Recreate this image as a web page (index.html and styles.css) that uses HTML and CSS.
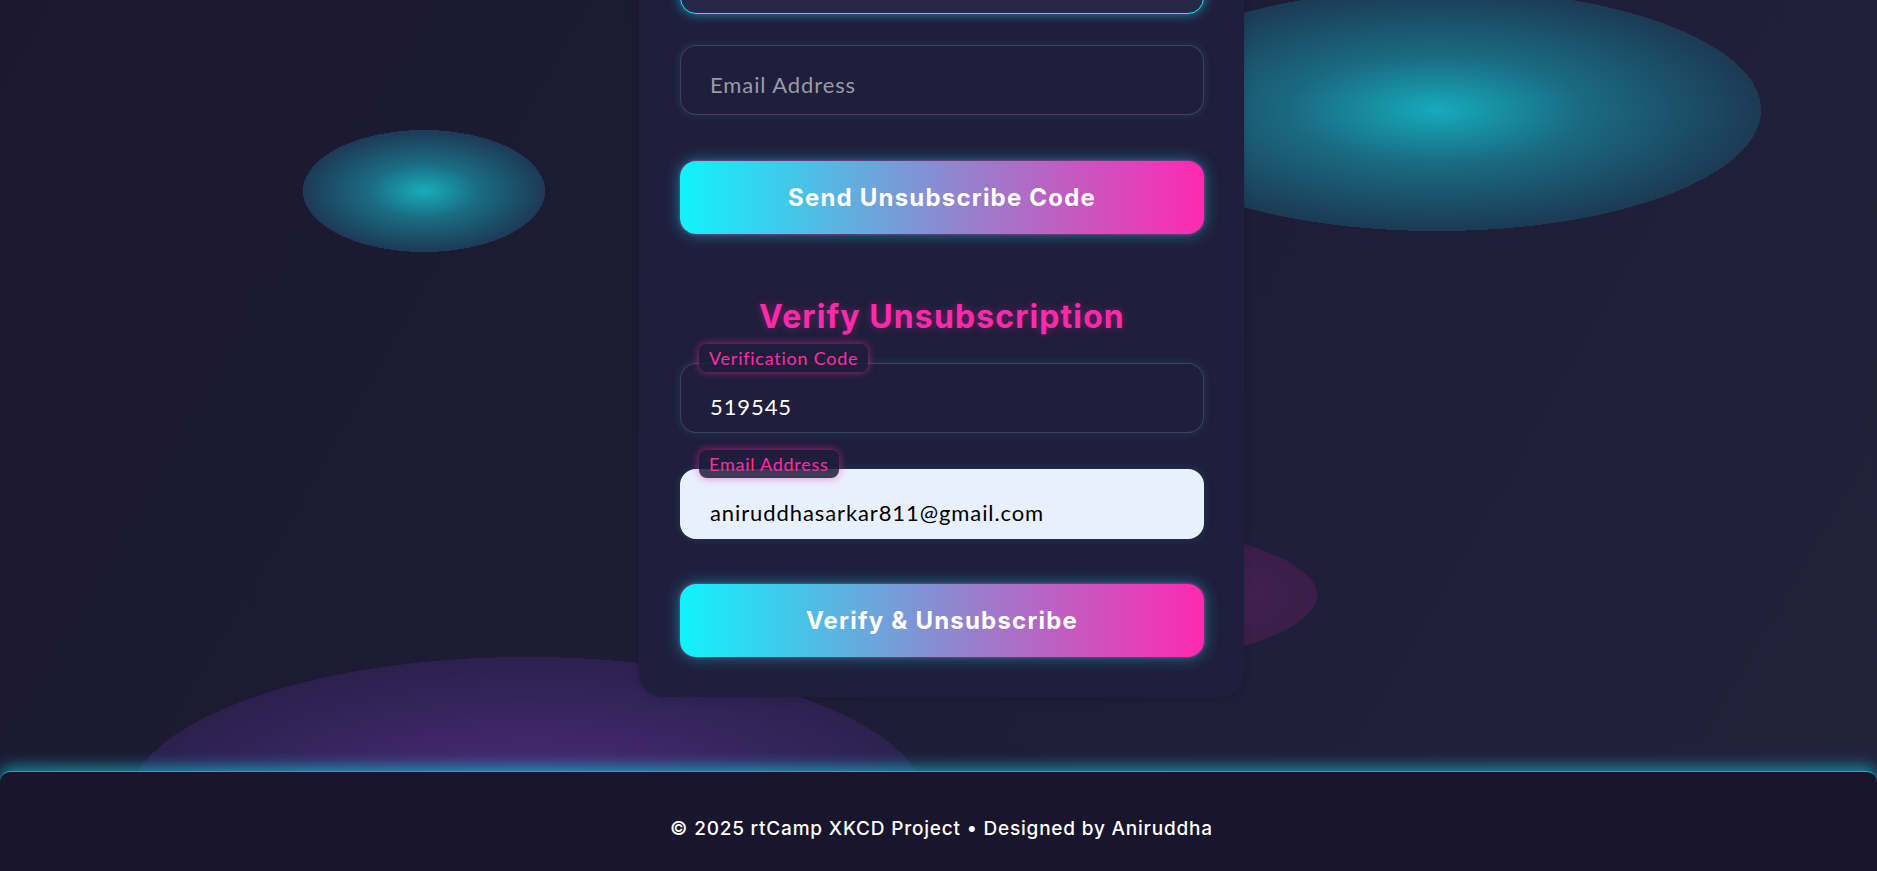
FILE: index.html
```html
<!DOCTYPE html>
<html lang="en">
<head>
<meta charset="utf-8">
<title>Unsubscribe - rtCamp XKCD Project</title>
<link rel="stylesheet" href="styles.css">
</head>
<body>
<div class="page">
  <main class="main">
    <section class="card">
      <form class="form">
        <div class="field field-top">
          <input class="input input-focus" type="text" aria-label="Name">
        </div>
        <div class="field field-email">
          <input class="input" type="email" placeholder="Email Address">
        </div>
        <button class="btn btn-send" type="button">Send Unsubscribe Code</button>
      </form>
      <h2 class="heading">Verify Unsubscription</h2>
      <form class="form">
        <div class="field field-code">
          <span class="label">Verification Code</span>
          <input class="input input-labeled" type="text" value="519545">
        </div>
        <div class="field field-email2">
          <span class="label">Email Address</span>
          <input class="input input-labeled input-filled" type="email" value="aniruddhasarkar811@gmail.com">
        </div>
        <button class="btn btn-verify" type="button">Verify &amp; Unsubscribe</button>
      </form>
    </section>
  </main>
  <footer class="footer">
    <p class="footer-text">© 2025 rtCamp XKCD Project • Designed by Aniruddha</p>
  </footer>
</div>
</body>
</html>
```

FILE: styles.css
```css
html, body {
  margin: 0;
  padding: 0;
  height: 100%;
  overflow: hidden;
}

body {
  font-family: "Lato", "Noto Sans", sans-serif;
  background: #1d1b33;
}

.page {
  height: 871px;
  display: flex;
  flex-direction: column;
  background:
    radial-gradient(ellipse 121px 61px at 424px 191px, #17adbb 0%, #1a6c83 45%, #1d3a55 100%, transparent 100%),
    radial-gradient(ellipse 324px 121px at 1437px 110px, #16abbb 0%, #1a6a82 45%, #1c3a54 100%, transparent 100%),
    radial-gradient(ellipse 317px 80px at 1000px 595px, rgba(170, 40, 150, 0.45) 0%, rgba(90, 30, 95, 0.45) 100%, transparent 100%),
    radial-gradient(ellipse 401px 150px at 527px 807px, rgba(95, 50, 150, 0.75) 0%, rgba(60, 40, 110, 0.45) 100%, transparent 100%),
    linear-gradient(120deg, #1b1830 0%, #1e1b35 45%, #22223b 100%);
}

.main {
  flex: 1;
  display: flex;
  justify-content: center;
  padding-left: 6px;
}

.card {
  width: 605px;
  box-sizing: border-box;
  margin-top: -56px;
  align-self: flex-start;
  padding: 0 40px 40px 41px;
  background: #1f1e3c;
  border-radius: 24px;
  box-shadow: 0 2px 10px rgba(0, 0, 0, 0.12);
}

.form {
  display: flex;
  flex-direction: column;
  margin: 0;
}

.field {
  position: relative;
}

.field-email {
  margin-top: 31px;
}

.field-code {
  margin-top: 30px;
}

.field-email2 {
  margin-top: 36px;
}

.input {
  display: block;
  width: 100%;
  box-sizing: border-box;
  height: 70px;
  padding: 8px 29px 0;
  border-radius: 16px;
  border: 1px solid rgba(255, 255, 255, 0.15);
  background: #1f1e3d;
  color: #ffffff;
  font-family: "Lato", "Noto Sans", sans-serif;
  font-size: 22px;
  letter-spacing: 0.9px;
  box-shadow: 0 0 10px rgba(16, 238, 251, 0.14);
  outline: none;
}

.input::placeholder {
  color: #9b9ba5;
}

.input-focus {
  border-color: #10eefb;
  background: #252846;
  box-shadow: 0 0 12px rgba(16, 238, 251, 0.55);
}

.input-labeled {
  padding-top: 17px;
}

.input-filled {
  background: #e8f0fe;
  color: #000000;
}

.label {
  position: absolute;
  z-index: 1;
  top: -19px;
  left: 19px;
  height: 28px;
  line-height: 28px;
  padding: 0 10px;
  border-radius: 8px;
  font-size: 18px;
  letter-spacing: 0.75px;
  color: #ff2aa9;
  background: rgba(31, 29, 57, 0.86);
  box-shadow: 0 0 8px rgba(255, 42, 170, 0.6);
}

.btn {
  display: block;
  width: 100%;
  height: 73px;
  border: 0;
  border-radius: 16px;
  background: linear-gradient(90deg, #10f3fc 0%, #8b8ad0 50%, #ff29b0 100%);
  color: #ffffff;
  font-family: "Inter", "Noto Sans", sans-serif;
  font-weight: 700;
  font-size: 24px;
  letter-spacing: 1.2px;
  box-shadow: 0 0 3px rgba(255, 42, 170, 0.8), 0 0 16px rgba(16, 238, 251, 0.45);
  cursor: pointer;
}

.btn-send {
  margin-top: 46px;
}

.btn-verify {
  margin-top: 45px;
}

.heading {
  margin: 67px 0 0;
  font-family: "Inter", "Noto Sans", sans-serif;
  font-weight: 700;
  font-size: 32px;
  line-height: 1;
  letter-spacing: 1.1px;
  text-align: center;
  color: #ff2aa9;
  text-shadow: 0 0 8px rgba(255, 42, 170, 0.35);
}

.footer {
  height: 100px;
  box-sizing: border-box;
  padding-top: 46px;
  background: #19152d;
  border-radius: 10px 10px 0 0;
  border-top: 1px solid rgba(16, 238, 251, 0.7);
  box-shadow: 0 -4px 16px rgba(16, 238, 251, 0.55);
  position: relative;
  z-index: 2;
}

.footer-text {
  margin: 0;
  padding-left: 6px;
  text-align: center;
  font-family: "Inter", "Noto Sans", sans-serif;
  font-weight: 500;
  font-size: 19px;
  letter-spacing: 0.8px;
  line-height: 22px;
  color: #ffffff;
}
```
